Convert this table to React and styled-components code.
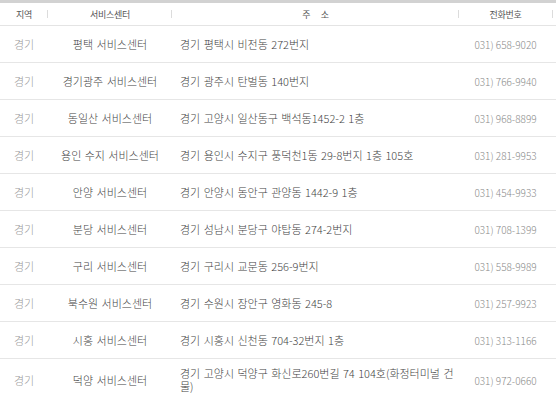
import React from "react";
import styled, { createGlobalStyle } from "styled-components";

const Global = createGlobalStyle`
  html, body { margin: 0; padding: 0; background: #fff; }
  body { font-family: "Noto Sans CJK KR", "Noto Sans", sans-serif; }
`;

const Table = styled.table`
  width: 556px;
  border-collapse: collapse;
  table-layout: fixed;
  font-family: "Noto Sans CJK KR", "Noto Sans", sans-serif;
`;

const HeadCell = styled.th`
  height: 22px;
  padding: 0 ${(p) => (p.$last ? "4px" : "0")} 0 0;
  border-top: 3px solid #d2d2d2;
  border-bottom: 1px solid #e4e4e4;
  font-size: 9px;
  font-weight: 400;
  letter-spacing: -0.3px;
  color: #555;
  text-align: center;
  white-space: pre;
  background: linear-gradient(#dcdcdc, #dcdcdc) no-repeat
    right ${(p) => (p.$last ? "3px" : "0")} center / 1px 8px;
`;

const Row = styled.tr`
  border-bottom: 1px solid #e6e6e6;
`;

const Cell = styled.td`
  height: 20px;
  padding: 8px ${(p) => (p.$last ? "4px" : "0")} 8px ${(p) => (p.$left ? "8px" : "0")};
  font-size: ${(p) => (p.$small ? "10px" : "11px")};
  font-weight: 300;
  line-height: 13px;
  word-spacing: ${(p) => (p.$small ? "0" : "1px")};
  text-align: ${(p) => (p.$left ? "left" : "center")};
  color: ${(p) => p.$color || "#444"};
  vertical-align: middle;
`;

const rows = [
  ["평택 서비스센터", "경기 평택시 비전동 272번지", "031) 658-9020"],
  ["경기광주 서비스센터", "경기 광주시 탄벌동 140번지", "031) 766-9940"],
  ["동일산 서비스센터", "경기 고양시 일산동구 백석동1452-2 1층", "031) 968-8899"],
  ["용인 수지 서비스센터", "경기 용인시 수지구 풍덕천1동 29-8번지 1층 105호", "031) 281-9953"],
  ["안양 서비스센터", "경기 안양시 동안구 관양동 1442-9 1층", "031) 454-9933"],
  ["분당 서비스센터", "경기 성남시 분당구 야탑동 274-2번지", "031) 708-1399"],
  ["구리 서비스센터", "경기 구리시 교문동 256-9번지", "031) 558-9989"],
  ["북수원 서비스센터", "경기 수원시 장안구 영화동 245-8", "031) 257-9923"],
  ["시흥 서비스센터", "경기 시흥시 신천동 704-32번지 1층", "031) 313-1166"],
  [
    "덕양 서비스센터",
    <>
      경기 고양시 덕양구 화신로260번길 74 104호(화정터미널 건
      <br />
      물)
    </>,
    "031) 972-0660",
  ],
];

export default function App() {
  return (
    <>
      <Global />
      <Table>
        <colgroup>
          <col style={{ width: 48 }} />
          <col style={{ width: 124 }} />
          <col style={{ width: 287 }} />
          <col />
        </colgroup>
        <thead>
          <tr>
            <HeadCell>지역</HeadCell>
            <HeadCell>서비스센터</HeadCell>
            <HeadCell>{"주      소"}</HeadCell>
            <HeadCell $last>전화번호</HeadCell>
          </tr>
        </thead>
        <tbody>
          {rows.map((r, i) => (
            <Row key={i}>
              <Cell $color="#9a9a9a">경기</Cell>
              <Cell $color="#444">{r[0]}</Cell>
              <Cell $left $color="#444">{r[1]}</Cell>
              <Cell $last $small $color="#8a8a8a">{r[2]}</Cell>
            </Row>
          ))}
        </tbody>
      </Table>
    </>
  );
}
